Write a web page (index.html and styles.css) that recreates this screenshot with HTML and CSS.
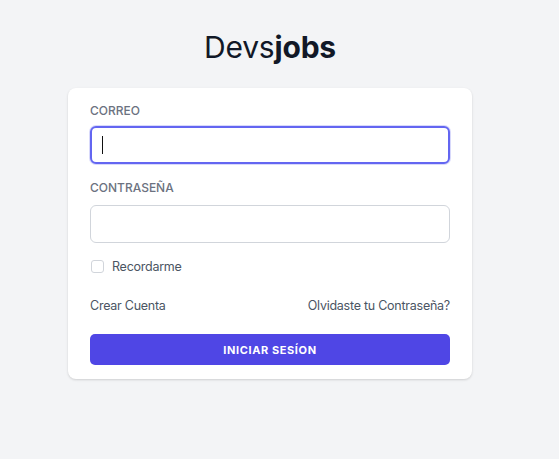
FILE: index.html
```html
<!DOCTYPE html>
<html lang="es">
<head>
<meta charset="utf-8">
<title>Devsjobs</title>
<link rel="stylesheet" href="styles.css">
</head>
<body>
<main class="page">
  <h1 class="brand">Devs<span class="brand-bold">jobs</span></h1>
  <form class="card">
    <label class="label" for="email">Correo</label>
    <div class="field-wrap">
      <input class="field field-focus" id="email" type="email">
      <span class="caret"></span>
    </div>
    <label class="label label-second" for="password">Contraseña</label>
    <input class="field" id="password" type="password">
    <div class="remember">
      <span class="checkbox"></span>
      <span class="remember-text">Recordarme</span>
    </div>
    <div class="links">
      <a class="link" href="#">Crear Cuenta</a>
      <a class="link" href="#">Olvidaste tu Contraseña?</a>
    </div>
    <button class="submit" type="button">Iniciar sesíon</button>
  </form>
</main>
</body>
</html>
```
FILE: styles.css
```css
* { box-sizing: border-box; }
html, body { margin: 0; padding: 0; }
body {
  background: #f3f4f6;
  font-family: Inter, "Noto Sans", sans-serif;
  width: 559px;
  height: 459px;
}
.page {
  width: 540px;
  display: flex;
  flex-direction: column;
  align-items: center;
  padding-top: 29px;
}
.brand {
  margin: 0 0 23px;
  font-size: 30px;
  line-height: 36px;
  font-weight: 400;
  color: #111827;
  letter-spacing: -0.2px;
}
.brand-bold { font-weight: 700; }
.card {
  width: 404px;
  background: #fff;
  border-radius: 8px;
  box-shadow: 0 1px 3px rgba(0,0,0,0.10), 0 1px 2px rgba(0,0,0,0.06);
  padding: 15px 22px 14px;
  display: flex;
  flex-direction: column;
}
.label {
  font-size: 12px;
  line-height: 16px;
  font-weight: 500;
  text-transform: uppercase;
  color: #6b7280;
  margin-bottom: 7px;
}
.label-second { margin-top: 16px; margin-bottom: 9px; }
.field-wrap { position: relative; }
.field {
  display: block;
  height: 38px;
  width: 100%;
  border: 1px solid #d1d5db;
  border-radius: 6px;
  background: #fff;
  outline: none;
  font: inherit;
  padding: 0 12px;
}
.field-focus, .field:focus {
  border: 2px solid #6366f1;
  box-shadow: 0 0 0 1px rgba(99,102,241,0.25);
}
.caret {
  position: absolute;
  left: 12px;
  top: 10px;
  width: 1px;
  height: 18px;
  background: #111;
}
.remember {
  margin-top: 17px;
  display: flex;
  align-items: center;
  height: 13px;
}
.checkbox {
  width: 13px;
  height: 13px;
  border: 1px solid #d1d5db;
  border-radius: 3px;
  background: #fff;
  margin-left: 1px;
}
.remember-text {
  margin-left: 8px;
  font-size: 12.5px;
  letter-spacing: -0.25px;
  color: #4b5563;
}
.links {
  margin-top: 25px;
  display: flex;
  justify-content: space-between;
  font-size: 12.5px;
  letter-spacing: -0.25px;
  line-height: 16px;
}
.link { color: #4b5563; text-decoration: none; }
.submit {
  margin-top: 20px;
  height: 31px;
  border: none;
  border-radius: 5px;
  background: #4f46e5;
  color: #fff;
  font: inherit;
  font-size: 11px;
  font-weight: 700;
  letter-spacing: 0.6px;
  text-transform: uppercase;
}
```
